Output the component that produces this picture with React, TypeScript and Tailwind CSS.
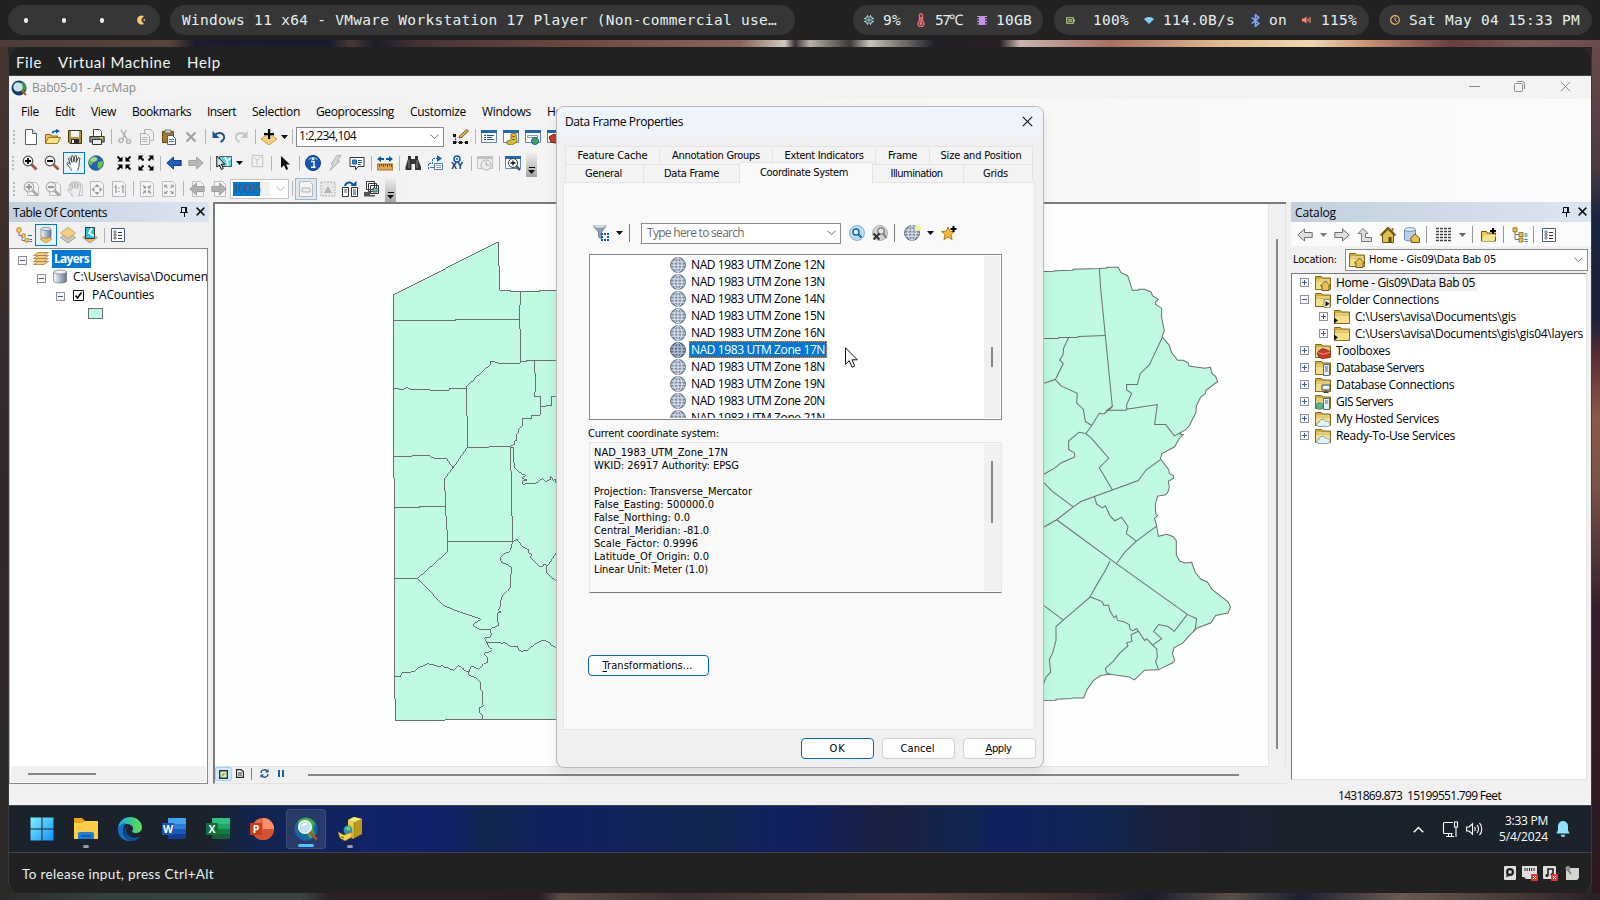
import React, { useLayoutEffect, useRef, useState } from 'react';

type Kids = { children?: React.ReactNode };

/* Single line label whose tracking is tuned so that it occupies an exact advance width. */
function Label({ w, className = '', children }: { w: number; className?: string; children: React.ReactNode }) {
  const ref = useRef<HTMLSpanElement>(null);
  const [spacing, setSpacing] = useState(0);
  useLayoutEffect(() => {
    const el = ref.current;
    if (!el) return;
    const count = (el.textContent || '').length;
    setSpacing((w - el.getBoundingClientRect().width) / Math.max(1, count));
  }, [w]);
  return (
    <span className={`inline-block whitespace-pre ${className}`} ref={ref} style={{ letterSpacing: `${spacing}px` }}>
      {children}
    </span>
  );
}

function Ic({ s = 16, children }: { s?: number } & Kids) {
  return (
    <svg width={s} height={s} viewBox="0 0 16 16" className="block shrink-0" fill="none">
      {children}
    </svg>
  );
}

/* ---------- toolbar primitives ---------- */
const Cell = ({ children, on }: { on?: boolean } & Kids) => (
  <div className={`flex h-[22px] w-[22px] shrink-0 items-center justify-center ${on ? 'border border-[#0078d7] bg-[#e5f1fb]' : ''}`}>{children}</div>
);
const Sep = () => (
  <div className="flex w-[6px] shrink-0 justify-center">
    <div className="h-[15px] w-px bg-[#b4b4b4]" />
  </div>
);
const Grip = () => (
  <div className="flex w-[10px] shrink-0 flex-col items-start gap-[2px] pl-[3px]">
    {[0, 1, 2, 3].map((i) => (
      <div key={i} className="h-[2px] w-[2px] bg-[#b9b9b9]" />
    ))}
  </div>
);
const Caret = ({ c = '#111' }: { c?: string }) => (
  <svg width="7" height="4" viewBox="0 0 7 4" className="block shrink-0">
    <path d="M0 0h7L3.5 4z" fill={c} />
  </svg>
);
const Overflow = () => (
  <div className="ml-[2px] mt-[3px] flex h-[24px] w-[11px] shrink-0 flex-col items-center justify-end gap-[2px] bg-gradient-to-b from-[#f0f0f0] to-[#a5a5a5] pb-[3px]">
    <div className="h-px w-[6px] bg-black" />
    <Caret />
  </div>
);
const Chevron = ({ c = '#666' }: { c?: string }) => (
  <svg width="9" height="6" viewBox="0 0 9 6" className="block shrink-0" fill="none">
    <path d="M.5 .7l4 4 4-4" stroke={c} />
  </svg>
);

/* ---------- toolbar icons ---------- */
const New = () => (
  <Ic>
    <path d="M2.500 .5h7l4 4v11h-11z" fill="#fdfeff" stroke="#4e6074" />
    <path d="M9.500 .5v4h4" fill="#dbe6f0" stroke="#4e6074" />
  </Ic>
);
const Open = () => (
  <Ic>
    <path d="M.5 14.500v-9h5l1 1.500h6v2" fill="#e6c254" stroke="#8a6a1e" />
    <path d="M.5 14.500l3-6h12l-3 6z" fill="#fbe27f" stroke="#9b7a28" />
    <path d="M7.500 4.500c0-2 2-2.500 4-2.500" stroke="#0b5aa8" strokeWidth="1.600" />
    <path d="M11 0l4 2-4 2.500z" fill="#0b5aa8" />
  </Ic>
);
const Save = () => (
  <Ic>
    <path d="M1.500 1.500h13v13H3L1.500 13z" fill="#b39432" stroke="#3a3219" />
    <path d="M4 2h8v6H4z" fill="#eef2f7" />
    <path d="M4 10h8v4H4z" fill="#2b2b2b" />
    <path d="M5 11h2v3H5z" fill="#fff" />
  </Ic>
);
const Print = () => (
  <Ic>
    <path d="M4.500 .5h6l2 2v5h-8z" fill="#fff" stroke="#444" />
    <path d="M.8 7.500h14.400v5.500H.8z" fill="#8d9085" stroke="#333" />
    <path d="M3.500 10.500h9v5h-9z" fill="#e8ecef" stroke="#333" />
    <path d="M11 8.800h3" stroke="#c8d838" strokeWidth="1.500" />
  </Ic>
);
const Cut = () => (
  <Ic>
    <path d="M4 1l6 9M9 1l-3 9" stroke="#b4b4b4" strokeWidth="1.500" />
    <circle cx="4" cy="11.500" r="2" stroke="#b4b4b4" strokeWidth="1.500" />
    <circle cx="11.500" cy="12.500" r="2" stroke="#b4b4b4" strokeWidth="1.500" />
  </Ic>
);
const Copy = () => (
  <Ic>
    <path d="M5.500 .5h6l3 3v8h-9z" fill="#f2f2f2" stroke="#b0b0b0" />
    <path d="M1.500 4.500h6l3 3v8h-9zM3.500 8.500h5M3.500 10.500h5M3.500 12.500h5" fill="#f2f2f2" stroke="#b0b0b0" />
  </Ic>
);
const Paste = () => (
  <Ic>
    <path d="M1.500 2.500h11v11h-11z" fill="#a9792b" stroke="#6e4a12" />
    <path d="M4 1h6v3H4z" fill="#d8dce0" stroke="#555" strokeWidth=".8" />
    <path d="M6.500 6.500h5l3 3v6h-8z" fill="#fff" stroke="#47607c" />
    <path d="M8 10.500h5M8 12.500h5" stroke="#4a7ab8" />
  </Ic>
);
const Del = () => (
  <Ic>
    <path d="M3.500 3.500l9 9M12.500 3.500l-9 9" stroke="#a2a2a2" strokeWidth="2.200" />
  </Ic>
);
const Undo = ({ g, flip }: { g?: boolean; flip?: boolean }) => (
  <Ic>
    <g transform={flip ? 'translate(16 0) scale(-1 1)' : undefined}>
      <path d="M3.500 6.500C6 3.500 11 3 12.800 6.500c1.200 3-1 5.500-3.300 6.500" stroke={g ? '#c4c4c4' : '#1a5490'} strokeWidth="2" />
      <path d="M1.500 2v7h7z" fill={g ? '#c4c4c4' : '#1a5490'} />
    </g>
  </Ic>
);
const AddData = () => (
  <Ic>
    <path d="M8 4l8 6-8 6-8-6z" fill="#f6cf74" stroke="#b78a3a" strokeWidth=".8" />
    <path d="M7 0h2.200v4H13v2.200H9.200V10H7V6.200H3V4h4z" fill="#000" />
  </Ic>
);
const Editor = () => (
  <Ic>
    <path d="M1.500 6.500l2 7h11" stroke="#222" strokeDasharray="2 1" />
    <path d="M0 5h3v3H0zM0 12h3v3H0zM6 12h3v3H6zM12 12h3v3h-3z" fill="#111" />
    <path d="M6 9l1-2.500L14 .5l1.500 1.500-6.500 6.300z" fill="#e9b44a" stroke="#5a3a10" strokeWidth=".8" />
  </Ic>
);
const WinIc = ({ children }: Kids) => (
  <Ic>
    <path d="M.5 1.500h15v12H.5z" fill="#fdfdfd" stroke="#5b87b8" />
    <path d="M0 1h16v3H0z" fill="#2667ad" />
    {children}
  </Ic>
);
const TableWin = () => (
  <WinIc>
    <path d="M3 6.500h2M6 6.500h7M3 8.500h2M6 8.500h5M3 10.500h2M6 10.500h7" stroke="#1d4f9b" />
  </WinIc>
);
const CatWin = () => (
  <WinIc>
    <path d="M8 5l5-1 1 9-5 3-5-1v-3l4-1z" fill="#dcbc32" stroke="#7d6410" strokeWidth=".8" />
    <path d="M9.500 7.500h2M9.500 10.500h2" stroke="#5a4810" />
  </WinIc>
);
const SearchWin = () => (
  <WinIc>
    <path d="M2.500 6.500h10v2h-10z" stroke="#7aa0cc" />
    <circle cx="10" cy="12" r="3.500" fill="#48a060" stroke="#1b5aa5" />
  </WinIc>
);
const ToolWin = () => (
  <WinIc>
    <path d="M2 8l5-3 8 4-2 6-9-2z" fill="#c83c2e" stroke="#7d1c14" />
  </WinIc>
);
const Mag = ({ minus, g }: { minus?: boolean; g?: boolean }) => (
  <Ic>
    {g && <path d="M4.500 1.500h8l3 3v10h-11z" fill="#f4f4f4" stroke="#bdbdbd" />}
    <path d="M9.500 9.500l5 5" stroke={g ? '#a8a8a8' : '#9a5a48'} strokeWidth="2.800" />
    <circle cx="6" cy="6" r="4.800" fill={g ? '#f0f0f0' : '#f4f6f8'} stroke={g ? '#adadad' : '#555'} strokeWidth="1.200" />
    <path d={minus ? 'M3 6h6' : 'M3 6h6M6 3v6'} stroke={g ? '#999' : '#000'} strokeWidth="1.800" />
  </Ic>
);
const Hand = ({ g }: { g?: boolean }) => (
  <Ic>
    {g && <path d="M4.500 1.500h8l3 3v10h-11z" fill="#f4f4f4" stroke="#c4c4c4" />}
    <path
      d="M5.500 15.500C5 12.500 2 11 .8 8.500c.2-1.500 2-1 3.500 1L2.500 3.800c.3-1.200 1.500-1 2 .2L6 7.500l-.8-6c.5-1.300 1.800-1 2 .3L8 7l.8-6c.7-1 1.800-.6 1.800.6L10.200 7.500l2-4.500c.8-.9 1.800-.3 1.600.8C13 8 13.500 11.500 11.500 15.500"
      fill={g ? '#eee' : '#fff'}
      stroke={g ? '#b0b0b0' : '#333'}
      strokeWidth=".9"
    />
  </Ic>
);
const Globe = () => (
  <Ic>
    <circle cx="8" cy="8" r="7.300" fill="#2463b5" stroke="#244a80" strokeWidth=".8" />
    <path d="M4 2c3-1 5 0 5.500 1.500L7 6.500 4.500 8 3 11 1 8.500 1.500 5zM10 7l4.500-1 .5 3-3 5-2-1-.5-3z" fill="#6cc24a" />
    <ellipse cx="6" cy="4.500" rx="3.500" ry="2" fill="#fff" opacity=".45" />
  </Ic>
);
const Arrows4 = ({ out, g }: { out?: boolean; g?: boolean }) => (
  <Ic>
    {g && <path d="M1.500 .5h10l3 3v12h-13z" fill="#f4f4f4" stroke="#bdbdbd" />}
    <g transform={g ? 'translate(3 3.500) scale(.62)' : undefined}>
      {[0, 90, 180, 270].map((r) => (
        <g key={r} transform={`rotate(${r} 8 8)`}>
          <path d="M1.500 1.500l4 4" stroke={g ? '#999' : '#000'} strokeWidth="2" />
          <path d={out ? 'M.5 .5h5l-5 5z' : 'M6.500 6.500h-5l5-5z'} fill={g ? '#999' : '#000'} />
        </g>
      ))}
    </g>
  </Ic>
);
const Arrow = ({ dir, c, s, page }: { dir: 'l' | 'r' | 'u'; c: string; s: string; page?: boolean }) => (
  <Ic>
    {page && <path d="M3.500 .5h8l3 3v12h-11z" fill="#f4f4f4" stroke="#bdbdbd" />}
    <path
      transform={dir === 'r' ? 'rotate(180 8 8)' : dir === 'u' ? 'rotate(90 8 8)' : undefined}
      d="M.8 8l6.700-6v3.500h7.700v5H7.500V14z"
      fill={c}
      stroke={s}
    />
  </Ic>
);
const Select = () => (
  <Ic>
    <path d="M3.500 1.500h12v10h-12z" fill="#5cd3ea" stroke="#555" />
    <path d="M9 2l2 4 4-3M11 6l1 5" stroke="#fff" strokeWidth="1.500" />
    <path d="M.8 1v11l2.500-2 2 4.500 2-1-2-4.300h3.500z" fill="#e4e4e4" stroke="#111" />
  </Ic>
);
const Clear = () => (
  <Ic s={14}>
    <path d="M2.500 1.500h12v13h-12zM5 4l3 3 5-4M8 7v6" fill="#f3f3f3" stroke="#bbb" />
  </Ic>
);
const Pointer = () => (
  <Ic>
    <path d="M4 1v12l3-2.700L9.200 15l2-1L9.200 9.600H13z" fill="#111" />
  </Ic>
);
const Info = () => (
  <Ic>
    <circle cx="8" cy="8" r="7.500" fill="#1657b5" stroke="#0b3a85" />
    <path d="M3 5c2-4 8-4 10 0-3-1-7-1-10 0z" fill="#6f9fe0" />
    <path d="M6 6.500h3V12h1.200M6 12.200h4.500" stroke="#fff" strokeWidth="1.400" />
    <circle cx="8" cy="3.800" r="1.200" fill="#fff" />
  </Ic>
);
const Bolt = () => (
  <Ic>
    <path d="M10 .5h4L10 6h3L3 15.500 6.500 9H4z" fill="#d5d5d5" stroke="#b0b0b0" />
  </Ic>
);
const Popup = () => (
  <Ic>
    <path d="M1 2.500h14v9H9l-2.500 3.500v-3.500H1z" fill="#fff" stroke="#333" />
    <path d="M3.500 5h4v4h-4zM9 5.500h4M9 7.500h4M9 9.500h3" fill="#3b86d0" stroke="#1e61a8" />
  </Ic>
);
const Measure = () => (
  <Ic>
    <path d="M0 9h16v6H0z" fill="#e2a94a" stroke="#8a5b1a" strokeWidth=".8" />
    <path d="M2.500 9v3M4.500 9v2M6.500 9v3M8.500 9v2M10.500 9v3M12.500 9v2M14.500 9v3" stroke="#5a3a10" strokeWidth=".8" />
    <path d="M0 4l4-3v2h3v2H4v2zM16 4l-4-3v2H9v2h3v2z" fill="#0b5aa8" />
  </Ic>
);
const Bino = () => (
  <Ic>
    <path d="M3 1h3v3h4V1h3v3l3 8v3h-6V9H6.500v6H.5v-3L3 4z" fill="#333" />
    <path d="M4 5v8M12 5v8" stroke="#888" />
  </Ic>
);
const Route = () => (
  <Ic>
    <path d="M1.500 14V8.500h4V3.500h6" stroke="#1b5fa8" strokeDasharray="2 1" />
    <path d="M10 0l5 3.500-5 3.500z" fill="#1b5fa8" />
    <path d="M7.500 8.500h8v6h-8zM3 12.500h4" fill="#fff" stroke="#4a7ab0" />
    <path d="M9 10.500h5M9 12.500h5" stroke="#888" strokeWidth=".8" />
  </Ic>
);
const XY = () => (
  <div className="flex w-[16px] flex-col items-center">
    <svg width="8" height="8" viewBox="0 0 8 8" className="block" fill="none">
      <circle cx="4" cy="4" r="3" stroke="#0b5aa8" strokeWidth="1.500" />
      <circle cx="4" cy="4" r="1" fill="#0b5aa8" />
    </svg>
    <span className="h-[8px] font-['DejaVu_Sans'] text-[8px] font-bold leading-[8px] text-[#0b4a94]">XY</span>
  </div>
);
const Time = () => (
  <Ic>
    <path d="M.5 1.500h15v12H.5z" fill="#eee" stroke="#c0c0c0" />
    <path d="M0 1h16v3H0z" fill="#c0c0c0" />
    <circle cx="9" cy="10" r="5" fill="#eee" stroke="#b0b0b0" />
    <path d="M9 7v3h3" stroke="#a0a0a0" />
  </Ic>
);
const Viewer = () => (
  <WinIc>
    <path d="M10 10l5 5" stroke="#555" strokeWidth="2.500" />
    <circle cx="8" cy="8" r="4.500" fill="#fff" stroke="#333" />
    <path d="M5.500 8h5M8 5.500v5" stroke="#111" strokeWidth="1.300" />
  </WinIc>
);
const PageBox = ({ children }: Kids) => (
  <Ic>
    <path d="M1.500 .5h10l3 3v12h-13z" fill="#f4f4f4" stroke="#b8b8b8" />
    {children}
  </Ic>
);
const Swap = () => (
  <Ic>
    <path d="M.5 6.500h6v9h-6zM9.500 6.500h6v9h-6z" fill="#fff" stroke="#333" />
    <path d="M2 9h3M2 11h3M11 9h3" stroke="#555" />
    <path d="M3 5c1-4 6-5 8-1" stroke="#0b5aa8" strokeWidth="2" />
    <path d="M8.500 5h6V0z" fill="#0b5aa8" />
    <path d="M11 10h3v4h-3z" fill="#58b0c8" />
  </Ic>
);
const DDP = () => (
  <Ic>
    <path d="M2.500 .5h8v8h-8zM4.500 2.500h8v8h-8zM6.500 4.500h8v8h-8z" fill="#fff" stroke="#333" />
    <path d="M9 7h4v4H9z" fill="#6fbf6a" stroke="#2a6a9a" />
    <path d="M0 11h6v3h5v1.500H0z" fill="#555" />
  </Ic>
);

/* ---------- panel icons ---------- */
const Pin = () => (
  <svg width="8" height="10" viewBox="0 0 8 10" className="block" fill="none" shapeRendering="crispEdges">
    <path d="M1.500 .5h5v5h-5zM0 5.500h8M4 6v4M5.500 1v4" stroke="#111" />
  </svg>
);
const Close = ({ s = 9, c = '#111', sw = 1.6 }: { s?: number; c?: string; sw?: number }) => (
  <svg width={s} height={s} viewBox="0 0 10 10" className="block" fill="none">
    <path d="M.7 .7l8.600 8.600M9.300 .7L.7 9.300" stroke={c} strokeWidth={sw} />
  </svg>
);
const DrawOrder = () => (
  <Ic>
    <path d="M3 4v4.500h3.500M6 9v4.500h3" stroke="#777" />
    <circle cx="3" cy="3" r="2.500" fill="#f3c55c" stroke="#a87a20" strokeWidth=".7" />
    <circle cx="7.500" cy="8.500" r="2" fill="#f3c55c" stroke="#a87a20" strokeWidth=".7" />
    <path d="M9 11.500h3.500v3.500H9z" fill="#f3c55c" stroke="#a87a20" strokeWidth=".7" />
    <path d="M12 8.500h4M13.500 12.500H16M13.500 14.500H16" stroke="#2a6ab0" />
  </Ic>
);
const Cyl = ({ d }: { d?: boolean }) => (
  <Ic>
    {d && <path d="M8 7l6 5-6 4-6-4z" fill="#f3c55c" stroke="#b8862a" strokeWidth=".7" />}
    <path d={d ? 'M3 2v8c2 1.500 8 1.500 10 0V2z' : 'M1.500 3v9.500c2 2 11 2 13 0V3z'} fill="url(#cyl)" stroke="#6a7484" strokeWidth=".7" />
    <ellipse cx="8" cy={d ? 2 : 3} rx={d ? 5 : 6.5} ry={d ? 1.5 : 2} fill="#eef1f6" stroke="#6a7484" strokeWidth=".7" />
    <defs>
      <linearGradient id="cyl">
        <stop stopColor="#fff" />
        <stop offset="1" stopColor="#5f7390" />
      </linearGradient>
    </defs>
  </Ic>
);
const Visible = ({ sel }: { sel?: boolean }) => (
  <Ic>
    <path d="M8 5l7.500 5.500L8 16 .5 10.500z" fill={sel ? '#f3b95c' : '#c8c8c8'} stroke="#888" strokeWidth=".7" />
    {sel ? (
      <>
        <path d="M3.500 .5h9v11h-9z" fill="#29c3e0" stroke="#333" />
        <path d="M10 1l-3 5 5 3" stroke="#fff" strokeWidth="1.800" />
      </>
    ) : (
      <path d="M8 .5L15.500 6 8 11.500.5 6z" fill="#f6cf84" stroke="#b8862a" strokeWidth=".7" />
    )}
  </Ic>
);
const Options = () => (
  <Ic>
    <path d="M1.500 1.500h13v13h-13z" fill="#fff" stroke="#3e5f87" />
    <path d="M4 4h2v2H4zM4 7h2v2H4zM4 10h2v2H4z" fill="#fff" stroke="#555" strokeWidth=".8" />
    <path d="M8 5.500h4M8 8.500h4M8 11.500h4" stroke="#333" />
  </Ic>
);
const Stack = () => (
  <Ic>
    {[11, 8, 5, 2].map((y) => (
      <path key={y} d={`M.5 ${y + 2.5}l4.500-3h10.500l-4.500 3z`} fill="#f6cf84" stroke="#9a7028" strokeWidth=".7" />
    ))}
  </Ic>
);
const Box = ({ plus }: { plus?: boolean }) => (
  <svg width="9" height="9" viewBox="0 0 9 9" className="block shrink-0" fill="none" shapeRendering="crispEdges">
    <path d="M.5 .5h8v8h-8z" fill="#fafafa" stroke="#919191" />
    <path d={plus ? 'M2 4.500h5M4.500 2v5' : 'M2 4.500h5'} stroke="#3a5aa8" />
  </svg>
);
const House = () => (
  <Ic>
    <path d="M2.500 8v7.500h11V8L8 2.500z" fill="#e4c04c" stroke="#6d5312" />
    <path d="M.5 8.500L8 .8l7.500 7.700" stroke="#6d5312" strokeWidth="1.800" />
    <path d="M8.500 10h3v5.500h-3z" fill="#5d4610" />
    <path d="M11.500 1h2v3h-2z" fill="#a08030" />
  </Ic>
);
const Folder = ({ kind }: { kind: string }) => (
  <Ic>
    <path d="M.5 2.500v-1h6l1.500 1.500h7.500v11.500H.5z" fill="#cfac36" stroke="#86691a" />
    <path d="M1 6.500h14v7.500H1z" fill="#f5e08a" />
    <path d="M1.500 5h13" stroke="#fff" opacity=".8" />
    {kind === 'home' && <path d="M5.500 11L10.500 6l5 5h-1.500v4.500H7V11z" fill="#e7c25a" stroke="#5d4610" strokeWidth=".9" />}
    {kind === 'conn' && (
      <>
        <path d="M9 7.500h6v8H9z" fill="#f2f2ee" stroke="#86691a" strokeWidth=".7" />
        <path d="M10.500 9l4 2.700-4 2.700z" fill="#111" />
      </>
    )}
    {kind === 'link' && <path d="M0 8.500l4 3-4 3z" fill="#111" />}
    {kind === 'tool' && (
      <>
        <path d="M2.500 9l5-3.500 8 3-1.500 6-7 1.300L3 13z" fill="#c9392c" stroke="#7d1c14" strokeWidth=".8" />
        <path d="M3 9.500l5 1.800 7-2.300" stroke="#f4aaa0" strokeWidth=".8" />
      </>
    )}
    {kind === 'server' && <path d="M8.500 4.500h6v11h-6zM10 7h3M10 9h3M10 11h3" fill="#e6edf5" stroke="#4a6a90" />}
    {kind === 'dbc' && <path d="M7 8h8v5H7zM11 13v2.500M8.500 15.500h5" fill="#eaf2fa" stroke="#345" />}
    {kind === 'gis' && (
      <>
        <path d="M8.500 4.500h6v11h-6zM10 7h3M10 9h3" fill="#e6edf5" stroke="#4a6a90" />
        <circle cx="4.500" cy="12" r="3.500" fill="#5cb870" stroke="#3a7aa0" strokeWidth=".7" />
      </>
    )}
    {kind === 'cloud' && <path d="M4 15.500c-3 0-3-4 0-4 .5-4 5.500-4 6.500-1 4-1.500 6.500 4.500 2 5z" fill="#e3f1fb" stroke="#6a94b8" strokeWidth=".8" />}
  </Ic>
);
const WireGlobe = ({ dark }: { dark?: boolean }) => (
  <Ic>
    <circle cx="8" cy="8" r="7.500" fill={dark ? '#5a6e88' : '#7c8da3'} stroke={dark ? '#3d5270' : '#5c6e86'} strokeWidth=".9" />
    <path d="M1.500 5h13M.8 8.200h14.400M1.500 11.200h13M8 .8v14.400" stroke={dark ? '#d4dde8' : '#f3f6fa'} strokeWidth=".9" />
    <ellipse cx="8" cy="8" rx="4" ry="7.200" stroke={dark ? '#d4dde8' : '#f3f6fa'} strokeWidth=".9" />
  </Ic>
);

/* ---------- data ---------- */
const menus: [string, number][] = [
  ['File', 18], ['Edit', 20], ['View', 25], ['Bookmarks', 59], ['Insert', 29], ['Selection', 48],
  ['Geoprocessing', 78], ['Customize', 56], ['Windows', 49], ['Help', 24],
];
const catalog: { l: number; plus: boolean; k: string; t: string; w: number; sel?: boolean }[] = [
  { l: 0, plus: true, k: 'home', t: 'Home - Gis09\\Data Bab 05', w: 139, sel: true },
  { l: 0, plus: false, k: 'conn', t: 'Folder Connections', w: 103 },
  { l: 1, plus: true, k: 'link', t: 'C:\\Users\\avisa\\Documents\\gis', w: 161 },
  { l: 1, plus: true, k: 'link', t: 'C:\\Users\\avisa\\Documents\\gis\\gis04\\layers', w: 228 },
  { l: 0, plus: true, k: 'tool', t: 'Toolboxes', w: 54 },
  { l: 0, plus: true, k: 'server', t: 'Database Servers', w: 88 },
  { l: 0, plus: true, k: 'dbc', t: 'Database Connections', w: 118 },
  { l: 0, plus: true, k: 'gis', t: 'GIS Servers', w: 57 },
  { l: 0, plus: true, k: 'cloud', t: 'My Hosted Services', w: 103 },
  { l: 0, plus: true, k: 'cloud', t: 'Ready-To-Use Services', w: 119 },
];
const crs: [string, number][] = [
  ['NAD_1983_UTM_Zone_17N', 134], ['WKID: 26917 Authority: EPSG', 145], ['', 0], ['Projection: Transverse_Mercator', 158],
  ['False_Easting: 500000.0', 120], ['False_Northing: 0.0', 96], ['Central_Meridian: -81.0', 115],
  ['Scale_Factor: 0.9996', 104], ['Latitude_Of_Origin: 0.0', 115], ['Linear Unit: Meter (1.0)', 114],
];

/* ---------- host desktop bar ---------- */
const Pill = ({ className, children }: { className: string } & Kids) => (
  <div className={`flex h-[30px] shrink-0 items-center rounded-[15px] bg-[#363636] ${className}`}>{children}</div>
);
function TopBar() {
  return (
    <div className="flex h-[40px] shrink-0 items-center bg-[#212121] pl-[8px] font-['DejaVu_Sans_Mono',monospace] text-[14.500px] leading-[30px] text-[#e3f1f1]">
      <Pill className="w-[152px] pl-[16px]">
        <div className="h-[5px] w-[4px] rounded-full bg-[#e3f1f1]" />
        <div className="ml-[34px] h-[5px] w-[4px] rounded-full bg-[#e3f1f1]" />
        <div className="ml-[34px] h-[5px] w-[4px] rounded-full bg-[#e3f1f1]" />
        <svg width="10" height="10" viewBox="0 0 10 10" className="ml-[32px] block">
          <path d="M8 1A4.600 4.600 0 1 0 8 9L5.500 6V4z" fill="#ffc56d" />
          <circle cx="8.300" cy="5" r=".9" fill="#ffc56d" />
        </svg>
      </Pill>
      <Pill className="ml-[10px] w-[625px] pl-[12px]">
        <Label w={595}>Windows 11 x64 - VMware Workstation 17 Player (Non-commercial use…</Label>
      </Pill>
      <Pill className="ml-[58px] w-[190px] pl-[11px]">
        <svg width="10" height="10" viewBox="0 0 10 10" fill="none" className="block">
          <path d="M2 2h6v6H2zM4 4h2v2H4zM3.500 0v2M6.500 0v2M3.500 8v2M6.500 8v2M0 3.500h2M0 6.500h2M8 3.500h2M8 6.500h2" stroke="#9ccfd8" />
        </svg>
        <Label className="ml-[9px]" w={18}>9%</Label>
        <svg width="8" height="14" viewBox="0 0 8 14" fill="none" className="ml-[16px] block">
          <path d="M2.500 8V2.200a1.500 1.500 0 0 1 3 0V8a3 3 0 1 1-3 0zM4 4v6" stroke="#f07178" strokeWidth="1.300" />
          <circle cx="4" cy="10.500" r="1.500" fill="#f07178" />
        </svg>
        <Label className="ml-[10px]" w={27}>57℃</Label>
        <svg width="10" height="9" viewBox="0 0 10 9" className="ml-[15px] block">
          <path d="M2 0h6v9H2z" fill="#c792ea" />
          <path d="M0 .5h10M0 3h10M0 5.500h10M0 8h10" stroke="#c792ea" />
        </svg>
        <Label className="ml-[9px]" w={36}>10GB</Label>
      </Pill>
      <Pill className="ml-[11px] w-[315px] pl-[12px]">
        <svg width="9" height="7" viewBox="0 0 9 7" fill="none" className="block">
          <path d="M.7 .7h6.600v5.600H.7zM8.500 2.500v2M2 2.700h4M2 4.300h4" stroke="#b5d883" strokeWidth="1.100" />
        </svg>
        <Label className="ml-[18px]" w={36}>100%</Label>
        <svg width="10" height="7" viewBox="0 0 10 7" className="ml-[15px] block">
          <path d="M0 2C3-.7 7-.7 10 2L5 7z" fill="#7dcfff" />
        </svg>
        <Label className="ml-[9px]" w={72}>114.0B/s</Label>
        <svg width="9" height="13" viewBox="0 0 9 13" fill="none" className="ml-[16px] block">
          <path d="M.8 3.500l7 6-3.300 2.800V.7l3.300 2.800-7 6" stroke="#82aaff" strokeWidth="1.600" />
        </svg>
        <Label className="ml-[9px]" w={18}>on</Label>
        <svg width="10" height="8" viewBox="0 0 10 8" fill="none" className="ml-[15px] block">
          <path d="M0 2.500h2L4.500 .2v7.600L2 5.500H0z" fill="#f78c6c" />
          <path d="M6 2.500v3M8 1v6" stroke="#f78c6c" strokeWidth="1.200" />
        </svg>
        <Label className="ml-[9px]" w={36}>115%</Label>
      </Pill>
      <Pill className="ml-[10px] w-[213px] pl-[11px]">
        <svg width="10" height="10" viewBox="0 0 10 10" fill="none" className="block">
          <circle cx="5" cy="5" r="4.300" stroke="#f0b86a" strokeWidth="1.200" />
          <path d="M5 2.300V5l2 2" stroke="#f0b86a" />
        </svg>
        <Label className="ml-[9px]" w={171}>Sat May 04 15:33 PM</Label>
      </Pill>
    </div>
  );
}

/* ---------- map ---------- */
const westOutline =
  'M40 225L355 65L355 137L358 140L359 211L390 211L391 214L480 214L480 211L545 211L545 1498L195 1499L195 1501L46 1501L46 1437L43 1436L43 774L40 773Z';
const westLines = [
  'M40 301H228V298H418',
  'M421 214V254L418 256V325L421 327V430H356L345 426L342 424H332V433L326 440L318 443L309 453L303 459L296 466L288 470L282 480L271 488L260 498V506H208V511H150V509L88 507L80 502L72 508L57 507L54 505H40',
  'M421 424H441V421H545M463 421V447L465 456L466 514L463 518V529H481V586H455V597H440V595H427V619L416 626V635L410 645V660L404 664V674L396 676',
  'M481 559H499L500 556H515V529H545',
  'M260 506V588L262 590V682H326L328 680H392L396 676',
  'M262 682L230 728L194 776V812L196 816V884L199 888V928L202 932V996L113 1075H43M113 1075L190 1156L228 1172L300 1196L301 1200L284 1209L280 1214L285 1221L305 1230L330 1229L334 1225L350 1219L357 1214L353 1205L354 1178L364 1177L355 1172L360 1163L361 1147L368 1124L382 1114L391 1103L394 1042L379 1032L364 1027L361 1013L368 1004L386 996L391 991L398 966H300L299 964H202',
  'M40 710H95L97 707H151L152 712L169 715L200 716L208 729L219 743M43 862H119L120 859H196',
  'M392 680V750L394 755V880L397 890V966L411 958L418 968L431 983L445 988L446 998L454 1003L452 1013L464 1024L478 1038L487 1041L490 1035H498L500 1041L530 997M498 1041L499 1056L513 1071L530 1084',
  'M392 682L401 684V724L405 745L410 750L428 764L439 766L429 770L428 776L441 780L426 784L430 793L446 789L463 792L476 785L487 775L497 786L510 779L512 768L520 781L530 777L524 783L530 791',
  'M330 1229L334 1244L330 1251L314 1253L319 1267L327 1280L337 1289L326 1298L314 1298V1306L322 1312L324 1327L311 1331L296 1349L275 1337L267 1355L253 1352L249 1345L235 1336L221 1351L201 1343L193 1342L190 1337L175 1339L155 1333L140 1331L139 1334L116 1343L104 1353L88 1357L67 1357L60 1371L43 1369',
  'M319 1267H360L362 1270L375 1268L389 1278L413 1281L418 1292L429 1294L432 1290L441 1293L460 1276L479 1264L495 1261L507 1267L514 1275L530 1285',
  'M267 1355L266 1366L287 1373L300 1386L302 1408L308 1415V1450L310 1459L299 1462V1480L307 1486V1498',
];
const eastOutline =
  'M20 212L74 211V209L129 208V205L208 203L230 201V199H265L273 215L293 224L307 267H325L327 264H344L363 272L368 284L385 294L377 302V309L395 320V348L403 386L396 404L418 430L424 450L443 474H460L474 482L477 491L524 498L541 495L546 514L557 522L563 537L528 563L526 573L512 583L499 610L498 628L478 668L466 680L452 688V694H460L447 707L434 730L396 750L391 766L416 797L418 809L431 816L431 823L415 832L418 850L413 866L405 873L383 876L376 900L377 927L383 934L374 942L380 965L385 995L410 989L430 996L439 1008V1050L449 1068L465 1074L485 1072L496 1102L513 1122L532 1130L547 1153L594 1189L602 1204L594 1222L557 1229L543 1251L502 1266L478 1288L458 1311L432 1325L427 1342L434 1362L428 1369L385 1390L344 1391L313 1420L297 1411L240 1403L212 1407L190 1422L172 1447L161 1473H128L126 1475L78 1477V1480L20 1481Z';
const eastLines = [
  'M208 203L212 262L226 401L247 611L231 622H287L290 619L382 605L374 664H407L433 698L452 688',
  'M20 410H84L86 407H142L145 404L226 401',
  'M396 408L358 488L331 513L322 546L290 546V562L305 572L290 605V619',
  'M116 407L101 438L99 458L89 474L100 484L76 531L39 543M76 531L93 550L142 572L140 601L160 619L166 655L185 667L168 691L186 707L236 764L208 792L247 857',
  'M247 611L222 633L208 631L185 667M168 691L147 687L116 713V738L134 749V760L93 778L76 792L39 813',
  'M391 768L348 799L325 830L247 858L193 877L153 892L130 908L80 946L39 969M39 834L67 862L130 908',
  'M80 946L259 1076L472 1226L500 1239L496 1267L490 1278',
  'M193 877L200 900L217 911L226 905L240 934L254 949L275 939L294 966L289 987L319 1009L380 965M319 1009L286 1040L259 1076',
  'M240 1068L226 1096L204 1132L179 1176L100 1243L78 1262V1303L68 1340L58 1360L62 1397L48 1412L39 1436M39 1198L100 1243',
  'M179 1174L217 1188L221 1199L236 1199L239 1214L252 1236L259 1229L262 1243L285 1249L298 1257L300 1270L308 1274L320 1268L344 1303L350 1298L368 1317L380 1328L382 1352L377 1366L385 1388',
  'M325 1276L303 1286L306 1306L290 1310L294 1319L270 1340L250 1364L226 1386L230 1399L240 1403',
  'M472 1226L433 1276L414 1262L386 1256L371 1276L395 1298L368 1317',
];
function MapView() {
  return (
    <svg width="1053" height="562" viewBox="215 204 1053 562" className="block bg-[#fdfffe]" shapeRendering="crispEdges">
      <g transform="translate(380 220) scale(.33333)" stroke="#6e6e6e" strokeWidth="3" fill="none">
        <path d={westOutline} fill="#bffae1" />
        {westLines.map((d) => <path key={d} d={d} />)}
      </g>
      <g transform="translate(1030 200) scale(.33333 .33801)" stroke="#6e6e6e" strokeWidth="3" fill="none">
        <path d={eastOutline} fill="#bffae1" />
        {eastLines.map((d) => <path key={d} d={d} />)}
      </g>
    </svg>
  );
}

/* ---------- ArcMap ---------- */
const PanelHead = ({ t, w }: { t: string; w: number }) => (
  <div className="flex h-[20px] shrink-0 items-center bg-gradient-to-r from-[#c2cfdd] to-[#dbe6f3] pl-[4px] pr-[4px] text-[12px]">
    <div className="pt-[2px]"><Label w={w}>{t}</Label></div>
    <div className="mb-px ml-auto mr-[8px]"><Pin /></div>
    <div className="mb-px"><Close /></div>
  </div>
);

function Toolbars() {
  return (
    <div className="flex h-[77px] shrink-0 flex-col pl-[3px]">
      <div className="-ml-[3px] flex h-[25px] items-center pb-[2px] pl-px">
        <Grip />
        <Cell><New /></Cell><Cell><Open /></Cell><Cell><Save /></Cell><Cell><Print /></Cell>
        <Sep />
        <Cell><Cut /></Cell><Cell><Copy /></Cell><Cell><Paste /></Cell><Cell><Del /></Cell>
        <Sep />
        <Cell><Undo /></Cell><Cell><Undo flip g /></Cell>
        <Sep />
        <Cell><AddData /></Cell>
        <div className="flex w-[9px] justify-center"><Caret /></div>
        <Sep />
        <div className="ml-px mt-px flex h-[20px] w-[148px] items-center justify-between border border-[#8a8a8a] bg-white pl-[2px] pr-[4px] text-[12px]">
          <Label className="-mt-[2px]" w={57}>1:2,234,104</Label>
          <Chevron />
        </div>
        <div className="ml-[6px]"><Cell><Editor /></Cell></div>
        <Sep />
        <Cell><TableWin /></Cell><Cell><CatWin /></Cell><Cell><SearchWin /></Cell><Cell><ToolWin /></Cell>
      </div>
      <div className="-ml-[3px] flex h-[26px] items-center">
        <Grip />
        <Cell><Mag /></Cell><Cell><Mag minus /></Cell><Cell on><Hand /></Cell><Cell><Globe /></Cell>
        <div className="w-[6px]" />
        <Cell><Arrows4 /></Cell><Cell><Arrows4 out /></Cell>
        <Sep />
        <Cell><Arrow dir="l" c="#1f5fc0" s="#123f8a" /></Cell><Cell><Arrow dir="r" c="#b8b8b8" s="#a5a5a5" /></Cell>
        <Sep />
        <Cell><Select /></Cell>
        <div className="flex w-[9px] justify-center"><Caret /></div>
        <div className="mb-[4px] ml-[2px]"><Cell><Clear /></Cell></div>
        <Sep />
        <Cell><Pointer /></Cell>
        <Sep />
        <Cell><Info /></Cell><Cell><Bolt /></Cell><Cell><Popup /></Cell>
        <Sep />
        <Cell><Measure /></Cell>
        <Sep />
        <Cell><Bino /></Cell><Cell><Route /></Cell><Cell><XY /></Cell>
        <Sep />
        <Cell><Time /></Cell>
        <Sep />
        <Cell><Viewer /></Cell>
        <Overflow />
      </div>
      <div className="-ml-[3px] flex h-[26px] items-center pb-px pl-px">
        <Grip />
        <Cell><Mag g /></Cell><Cell><Mag g minus /></Cell><Cell><Hand g /></Cell>
        <Cell><PageBox><path d="M8 3l2.500 3h-5zM8 14l2.500-3h-5zM2.500 8.500l3-2.500v5zM13.500 8.500l-3-2.500v5z" fill="#9a9a9a" /></PageBox></Cell>
        <Cell><PageBox><path d="M3.500 6l1.500-1v7M8 6.500v1M8 10v1M10.500 6L12 5v7" stroke="#9a9a9a" strokeWidth="1.300" /></PageBox></Cell>
        <Sep />
        <Cell><Arrows4 g /></Cell><Cell><Arrows4 g out /></Cell>
        <Sep />
        <Cell><Arrow dir="l" page c="#b0b0b0" s="#a0a0a0" /></Cell><Cell><Arrow dir="r" page c="#b0b0b0" s="#a0a0a0" /></Cell>
        <div className="flex h-[20px] w-[59px] items-center justify-between border border-[#c5c5c5] bg-white pl-[2px] pr-[3px] text-[12px] leading-[14px] text-[#505a66]">
          <span className="flex h-[14px] w-[37px] bg-[#f0f0f0]">
            <span className="flex w-[27px] bg-[#0078d7]"><Label w={27}>100%</Label></span>
          </span>
          <Chevron c="#b0b0b0" />
        </div>
        <Sep />
        <div className="flex h-[22px] w-[22px] items-center justify-center border border-[#9db6cf] bg-[#dfe8f1]">
          <PageBox><path d="M4 7h8v4H4z" fill="#eee" stroke="#b0b0b0" /></PageBox>
        </div>
        <Cell><Ic><path d="M1 1h14v14H1z" fill="#e8e8e8" stroke="#b0b0b0" strokeDasharray="2 1" /><path d="M4 12l4-7 4 7z" fill="#b5b5b5" /></Ic></Cell>
        <Cell><Swap /></Cell><Cell><DDP /></Cell>
        <Overflow />
      </div>
    </div>
  );
}

function Toc() {
  return (
    <div className="flex w-[200px] shrink-0 flex-col">
      <PanelHead t="Table Of Contents" w={94} />
      <div className="flex h-[26px] shrink-0 items-center pl-[4px]">
        <Cell><DrawOrder /></Cell><Cell on><Cyl d /></Cell><Cell><Visible /></Cell><Cell><Visible sel /></Cell>
        <Sep />
        <Cell><Options /></Cell>
      </div>
      <div className="flex h-[536px] w-[199px] flex-col overflow-hidden border border-[#828790] border-l-[#b5b8bd] bg-white text-[12px]">
        <div className="mt-px flex h-[18px] shrink-0 items-center pl-[8px]">
          <div className="mt-[2px]"><Box /></div>
          <div className="ml-[6px]"><Stack /></div>
          <div className="ml-[3px] h-[18px] w-[39px] bg-[#0078d7] pl-[2px] font-bold leading-[18px] text-white"><Label w={35}>Layers</Label></div>
        </div>
        <div className="flex h-[18px] w-[197px] shrink-0 items-center overflow-hidden pl-[27px]">
          <div className="mt-[2px]"><Box /></div>
          <div className="ml-[6px]"><Cyl /></div>
          <div className="ml-[5px] shrink-0"><Label w={139}>C:\Users\avisa\Document</Label></div>
        </div>
        <div className="flex h-[18px] shrink-0 items-center pl-[46px]">
          <div className="mt-[2px]"><Box /></div>
          <svg width="11" height="11" viewBox="0 0 11 11" className="ml-[8px] block" fill="none">
            <path d="M.5 .5h10v10h-10z" fill="#fff" stroke="#111" />
            <path d="M2.500 5.500l2 2.500 4-5.500" stroke="#000" strokeWidth="1.600" />
          </svg>
          <div className="ml-[8px]"><Label w={62}>PACounties</Label></div>
        </div>
        <div className="ml-[78px] mt-[4px] h-[11px] w-[15px] border border-[#6e6e6e] bg-[#bffae1]" />
        <div className="mx-px mb-px mt-auto flex h-[16px] items-center bg-[#f0f0f0] pl-[17px]">
          <div className="h-[2px] w-[68px] bg-[#868686]" />
        </div>
      </div>
    </div>
  );
}

function MapPane() {
  return (
    <div className="ml-[4px] flex w-[1073px] shrink-0 flex-col">
      <div className="flex h-[565px] border-l-2 border-t-2 border-[#7b7b7b]">
        <div className="border-b border-r border-[#e3e3e3]"><MapView /></div>
        <div className="ml-px flex w-[17px] border-r border-[#e3e3e3] bg-[#f0f0f0] pl-[6px] pt-[35px]">
          <div className="h-[510px] w-[2px] bg-[#868686]" />
        </div>
      </div>
      <div className="flex h-[17px] items-start border-b border-l-2 border-b-[#e3e3e3] border-l-[#7b7b7b] bg-[#f0f0f0]">
        <div className="flex h-[14px] w-[17px] items-center justify-center rounded-[2px] border border-[#99d1ff] bg-[#cce8ff]">
          <svg width="9" height="9" viewBox="0 0 9 9" fill="none"><path d="M.7 .7h7.600v7.600H.7z" fill="#e7f0c0" stroke="#333" strokeWidth="1.400" /><path d="M2 7l2-4 3 1z" fill="#7ab03a" /></svg>
        </div>
        <svg width="8" height="9" viewBox="0 0 8 9" fill="none" className="ml-[4px] mt-[2px]"><path d="M.6 .6h4.600l2.200 2.200v5.600H.6zM2 4h4M2 6h4" fill="#fff" stroke="#222" strokeWidth="1.200" /></svg>
        <div className="ml-[7px] mt-px h-[12px] w-px bg-[#808080]" />
        <svg width="9" height="9" viewBox="0 0 9 9" fill="none" className="ml-[8px] mt-[2px]"><path d="M1 4a3.500 3.500 0 0 1 6.500-1.500M8 5a3.500 3.500 0 0 1-6.500 1.500" stroke="#1b4f88" strokeWidth="1.300" /><path d="M8.500 0v3.500H5zM.5 9V5.500H4z" fill="#1b4f88" /></svg>
        <svg width="6" height="7" viewBox="0 0 6 7" className="ml-[9px] mt-[3px]"><path d="M0 0h2v7H0zM4 0h2v7H4z" fill="#1b5fa8" /></svg>
        <div className="ml-[24px] mt-[7px] h-[2px] w-[931px] bg-[#868686]" />
      </div>
    </div>
  );
}

function Catalog() {
  return (
    <div className="ml-[5px] flex w-[300px] shrink-0 flex-col">
      <PanelHead t="Catalog" w={41} />
      <div className="flex h-[24px] shrink-0 items-center bg-[#fbfbfb] pl-[6px] pt-px">
        <Arrow dir="l" c="#dedede" s="#6e6e6e" />
        <div className="ml-[7px]"><Caret c="#777" /></div>
        <div className="ml-[7px]"><Arrow dir="r" c="#dedede" s="#6e6e6e" /></div>
        <div className="ml-[7px]"><Ic><path d="M6 1.500l5 5H8.500v4h6v4h-10v-8H1z" fill="#dedede" stroke="#777" /></Ic></div>
        <div className="ml-[7px]"><House /></div>
        <div className="ml-[8px]"><Ic><path d="M.5 2.500v10c2 2 9 2 11 0v-10z" fill="#b9cfe8" stroke="#6c8db4" /><ellipse cx="6" cy="2.500" rx="5.500" ry="1.800" fill="#eef4fa" stroke="#6c8db4" /><path d="M6.500 11l4.500-4 4.500 4v4.500h-8z" fill="#e4c04c" stroke="#6d5312" /></Ic></div>
        <div className="ml-[6px] h-[17px] w-px bg-[#999]" />
        <div className="ml-[9px]"><Ic><path d="M0 1.500h16M0 4.500h16M0 7.500h16M0 10.500h16M0 13.500h16" stroke="#444" strokeDasharray="3 1" strokeWidth="1.400" /></Ic></div>
        <div className="ml-[7px]"><Caret c="#666" /></div>
        <div className="ml-[6px] h-[17px] w-px bg-[#999]" />
        <div className="ml-[8px]"><Ic><path d="M.5 4.500h5l1 1.500h8v8H.5z" fill="#e8c94a" stroke="#6d5312" /><path d="M3 8l-2 6h12l2-6z" fill="#f7e493" /><path d="M12 1v6M9 4h6" stroke="#000" strokeWidth="2" /></Ic></div>
        <div className="ml-[6px] h-[17px] w-px bg-[#999]" />
        <div className="ml-[8px]"><Ic><path d="M3 4v8.500h5M3 7.500h5" stroke="#777" /><path d="M1 .8h4v4H1zM7 5.500h4v4H7zM7 11h4v4H7z" fill="#e8c94a" stroke="#7d6410" strokeWidth=".8" /><path d="M12.500 7h3M12.500 9h3M12.500 12.500h3M12.500 14.500h3" stroke="#2a6ab0" /></Ic></div>
        <div className="ml-[5px] h-[17px] w-px bg-[#999]" />
        <div className="ml-[7px]"><Options /></div>
      </div>
      <div className="flex h-[27px] shrink-0 items-center pl-[2px] font-['DejaVu_Sans_Condensed','Open_Sans',sans-serif] text-[11px]">
        <Label className="pt-[2px]" w={44}>Location:</Label>
        <div className="ml-[8px] flex h-[22px] w-[243px] items-center border border-[#8a8a8a] bg-white pl-[3px] pr-[4px]">
          <Folder kind="home" />
          <div className="ml-[4px] pt-[2px]"><Label w={127}>Home - Gis09\Data Bab 05</Label></div>
          <div className="ml-auto"><Chevron /></div>
        </div>
      </div>
      <div className="flex h-[507px] w-[296px] flex-col border border-[#e3e3e3] border-l-[#7b7b7b] border-t-[#7b7b7b] bg-white text-[12px]">
        {catalog.map((n) => (
          <div key={n.t} className={`flex h-[17px] shrink-0 items-center ${n.l ? 'pl-[27px]' : 'pl-[8px]'}`}>
            <Box plus={n.plus} />
            <div className="ml-[6px]"><Folder kind={n.k} /></div>
            <div className={`ml-[3px] h-[17px] px-[2px] leading-[17px] ${n.sel ? 'bg-[#f0f0f0]' : ''}`}><Label w={n.w}>{n.t}</Label></div>
          </div>
        ))}
      </div>
    </div>
  );
}

/* ---------- dialog ---------- */
const Tab = ({ t, w, className }: { t: string; w: number; className: string }) => (
  <div className={`flex shrink-0 items-center justify-center border-r border-t border-[#e3e3e3] bg-[#f3f3f3] pt-[2px] ${className}`}><Label w={w}>{t}</Label></div>
);
const Btn = ({ u, t, w, className, blue }: { u?: string; t: string; w: number; className: string; blue?: boolean }) => (
  <div className={`flex h-[21px] items-center justify-center rounded-[4px] border bg-[#fdfdfd] pt-[2px] ${blue ? 'border-[#0067c0]' : 'border-[#d0d0d0]'} ${className}`}>
    <Label w={w}>{u && <span className="underline underline-offset-2">{u}</span>}{t}</Label>
  </div>
);
function Dialog() {
  return (
    <div className="absolute left-[547px] top-[30px] flex h-[662px] w-[488px] flex-col overflow-hidden rounded-[8px] border border-[#b9b9b9] bg-[#f0f0f0] font-['DejaVu_Sans_Condensed','Open_Sans',sans-serif] text-[11px] shadow-[0_6px_14px_rgba(0,0,0,0.08)]">
      <div className="flex h-[30px] shrink-0 items-center justify-between bg-[#eff3fa] pl-[8px] pr-[10px] font-['Open_Sans',sans-serif] text-[12px]">
        <Label w={118}>Data Frame Properties</Label>
        <div className="mb-[2px]"><Close s={11} sw={1} /></div>
      </div>
      <div className="ml-[8px] mt-[9px] flex h-[18px] w-[469px] shrink-0 border-l border-[#e3e3e3]">
        <Tab t="Feature Cache" w={70} className="w-[94px]" />
        <Tab t="Annotation Groups" w={88} className="w-[113px]" />
        <Tab t="Extent Indicators" w={79} className="w-[103px]" />
        <Tab t="Frame" w={29} className="w-[54px]" />
        <Tab t="Size and Position" w={81} className="w-[103px]" />
      </div>
      <div className="ml-[8px] flex h-[18px] w-[469px] shrink-0 items-stretch border-l border-[#e3e3e3]">
        <Tab t="General" w={37} className="w-[78px] pr-[2px]" />
        <Tab t="Data Frame" w={55} className="w-[96px]" />
        <div className="z-10 -mb-px -mt-[2px] flex w-[133px] shrink-0 items-center justify-center border-r border-t border-[#e3e3e3] bg-[#f9f9f9] pb-px pr-[4px] pt-px"><Label w={88}>Coordinate System</Label></div>
        <Tab t="Illumination" w={52} className="w-[91px] pr-[3px]" />
        <Tab t="Grids" w={25} className="w-[69px] pr-[5px]" />
      </div>
      <div className="ml-[6px] flex h-[548px] w-[472px] shrink-0 flex-col border border-[#e5e5e5] bg-[#f9f9f9] pl-[25px]">
        <div className="mt-[39px] flex h-[22px] shrink-0 items-center pl-[4px]">
          <Ic><path d="M0 1h13L8.500 7v7l-3-2V7z" fill="#8fa0b4" stroke="#53657c" strokeWidth=".7" /><ellipse cx="6.500" cy="1.500" rx="6" ry="1.200" fill="#d9e2ec" /><path d="M8 8h2v2H8zM11 8h2v2h-2zM14 8h2v2h-2zM8 11h2v2H8zM14 11h2v2h-2zM8 14h2v2H8zM11 14h2v2h-2zM14 14h2v2h-2z" fill="#0b5aa8" /></Ic>
          <div className="ml-[7px]"><Caret /></div>
          <div className="ml-[6px] h-[18px] w-px bg-[#777]" />
          <div className="ml-[11px] flex h-[21px] w-[200px] items-center justify-between border border-[#8a8a8a] bg-white pl-[5px] pr-[4px] font-['Open_Sans',sans-serif] text-[12px] text-[#6d6d6d]">
            <Label className="-mt-px" w={97}>Type here to search</Label>
            <Chevron />
          </div>
          <div className="ml-[8px]"><Ic><circle cx="8" cy="8" r="7.500" fill="#b9dcf5" stroke="#8ab4d8" /><circle cx="7" cy="7" r="3" fill="#e8f5ff" stroke="#1767b0" strokeWidth="1.500" /><path d="M9.500 9.500l3 3" stroke="#1767b0" strokeWidth="2" /></Ic></div>
          <div className="ml-[7px]"><Ic><circle cx="8" cy="8" r="7.500" fill="#d3d3d3" stroke="#b0b0b0" /><circle cx="9" cy="6" r="3.200" fill="#e6e6e6" stroke="#777" strokeWidth="1.300" /><path d="M11.500 9l3 4" stroke="#777" strokeWidth="2" /><path d="M1.500 8.500l6 6M7.500 8.500l-6 6" stroke="#333" strokeWidth="2" /></Ic></div>
          <div className="ml-[6px] h-[18px] w-px bg-[#777]" />
          <div className="relative ml-[9px]"><WireGlobe /><div className="absolute -right-[1px] top-0 h-[6px] w-[6px] rounded-full bg-[#f5f0a0]" /></div>
          <div className="ml-[7px]"><Caret /></div>
          <div className="ml-[7px]"><Ic><path d="M7 2l1.800 4.200 4.700.4-3.600 3 1.200 4.900L7 11.900l-4.100 2.600 1.200-4.900-3.600-3 4.700-.4z" fill="#fbbf2e" stroke="#b8741a" /><path d="M12.500 1v6M9.500 4h6" stroke="#000" strokeWidth="2" /></Ic></div>
        </div>
        <div className="mt-[10px] flex h-[166px] w-[413px] shrink-0 overflow-hidden border border-[#828790] bg-white p-px text-[12px]">
          <div className="flex h-[162px] flex-1 flex-col overflow-hidden pl-[79px] font-['Open_Sans',sans-serif]">
            {[12, 13, 14, 15, 16, 17, 18, 19, 20, 21].map((z) => (
              <div key={z} className="flex h-[17px] shrink-0 items-center">
                <WireGlobe dark={z === 17} />
                <div className={`ml-[3px] h-[17px] w-[138px] pl-[2px] leading-[17px] ${z === 17 ? 'bg-[#0078d7] text-white outline-1 -outline-offset-1 outline-dotted outline-[#e88a2a]' : ''}`}><Label w={134}>{`NAD 1983 UTM Zone ${z}N`}</Label></div>
              </div>
            ))}
          </div>
          <div className="w-[16px] bg-[#f0f0f0] pl-[7px] pt-[91px]"><div className="h-[20px] w-[2px] bg-[#868686]" /></div>
        </div>
        <div className="-ml-px mt-[6px] h-[16px] shrink-0 leading-[16px]"><Label w={131}>Current coordinate system:</Label></div>
        <div className="flex h-[151px] w-[413px] shrink-0 border border-[#e6e6e6] border-b-[#7b7b7b]">
          <div className="flex-1 pl-[4px] pt-[3px]">
            {crs.map(([t, w], i) => (
              <div key={i} className="h-[13px] leading-[13px]">{t && <Label w={w}>{t}</Label>}</div>
            ))}
          </div>
          <div className="my-px w-[17px] bg-[#f0f0f0] pl-[7px] pt-[17px]"><div className="h-[62px] w-[2px] bg-[#868686]" /></div>
        </div>
        <Btn blue u="T" t="ransformations..." w={90} className="-ml-px mt-[62px] w-[121px] shrink-0 pr-[2px]" />
      </div>
      <div className="mt-[8px] flex justify-end gap-[8px] pr-[7px]">
        <Btn blue t="OK" w={16} className="w-[73px]" />
        <Btn t="Cancel" w={34} className="w-[73px] pr-[2px]" />
        <Btn u="A" t="pply" w={26} className="w-[73px] pr-[2px]" />
      </div>
    </div>
  );
}

/* ---------- taskbar ---------- */
const Big = ({ children, ind, on }: { ind?: boolean; on?: boolean } & Kids) => (
  <div className={`relative flex h-[40px] w-[40px] shrink-0 items-center justify-center rounded-[4px] ${on ? 'border border-white/10 bg-white/10' : ''}`}>
    <svg width="24" height="24" viewBox="0 0 24 24" fill="none" className="block">{children}</svg>
    {ind && <div className={`absolute bottom-[1px] h-[3px] rounded-full ${on ? 'w-[16px] bg-[#4cc2ff]' : 'w-[6px] bg-[#9a9ea8]'}`} />}
  </div>
);
const Office = ({ c1, c2, c3, c4, b, l }: { c1: string; c2: string; c3: string; c4: string; b: string; l: string }) => (
  <>
    <path d="M6 1h18v6H6z" fill={c1} /><path d="M6 7h18v5H6z" fill={c2} /><path d="M6 12h18v5H6z" fill={c3} /><path d="M6 17h18v5H6z" fill={c4} />
    <path d="M0 6h12v12H0z" fill={b} />
    <text x="6" y="15.800" fontSize="10.500" fontWeight="bold" fontFamily="Open Sans, sans-serif" textAnchor="middle" fill="#fff">{l}</text>
  </>
);
function Taskbar() {
  return (
    <div className="flex h-[48px] shrink-0 items-center gap-[4px] border-y border-[#3f4248] bg-[linear-gradient(90deg,#1b222c_0,#1b222c_200px,#12244c_240px,#11226a_370px,#12206a_440px,#12254c_480px,#121f62_550px,#12254e_700px,#121f62_780px,#1a2140_880px,#12244e_960px,#121f62_990px,#12254c_1110px,#1a2038_1160px,#1b222c_1300px,#1b222c_1582px)] pl-[13px] font-['Open_Sans',sans-serif] text-white">
      <Big><defs><linearGradient id="win" x2="1" y2="1"><stop stopColor="#7ff2ff" /><stop offset="1" stopColor="#1090ff" /></linearGradient></defs><path d="M.5 .5h11v11H.5zM12.500 .5h11v11h-11zM.5 12.500h11v11H.5zM12.500 12.500h11v11h-11z" fill="url(#win)" /></Big>
      <Big ind><path d="M0 1h8l3 3h11v6H0z" fill="#e8a317" /><path d="M0 6h8l3-2h13v18H0z" fill="#ffcd45" /><path d="M4 22v-5c0-1.200.8-2 2-2h12c1.200 0 2 .8 2 2v5z" fill="#1a7fd6" /><path d="M7 18h10v2H7z" fill="#0d5ea8" /></Big>
      <Big>
        <defs><linearGradient id="edge" x2="1"><stop stopColor="#1aa6e0" /><stop offset="1" stopColor="#5fe24f" /></linearGradient></defs>
        <path d="M0 11C1 4 6 0 12 0c7 0 12 5 12 10 0 4-3 6-6 6-3 0-4.500-1.200-3.500-2.500C16.500 10 13 7 9 7c-5 0-8 3-9 6z" fill="url(#edge)" />
        <path d="M0 13c0-4 4-7 8-7-2 2-3 4.500-3 8 0 5 4 9 8 10C6 24.500 0 20 0 13z" fill="#0d72c8" />
        <path d="M8 13c0 5 5 7.500 9 7.500 2.500 0 4.500-1 5.500-1.500-2 3.500-6 5.500-9.500 5C8 23 5.500 18 6.500 14c.5-3 2.500-5 4.500-5-1.500 1-3 2.500-3 4z" fill="#0a4f9a" />
      </Big>
      <Big><Office c1="#41a5ee" c2="#2b7cd3" c3="#185abd" c4="#103f91" b="#1b55b5" l="W" /></Big>
      <Big><Office c1="#2fbf7d" c2="#21a366" c3="#107c41" c4="#185c37" b="#0f703b" l="X" /></Big>
      <Big><circle cx="13" cy="12" r="11" fill="#ed6c47" /><path d="M13 1a11 11 0 0 1 11 11H13z" fill="#ff8f6b" /><path d="M2 12h22a11 11 0 0 1-22 0z" fill="#d35230" /><path d="M0 6h12v12H0z" fill="#c43e1c" /><text x="6" y="15.800" fontSize="10.500" fontWeight="bold" fontFamily="Open Sans, sans-serif" textAnchor="middle" fill="#fff">P</text></Big>
      <Big on ind>
        <circle cx="12" cy="12" r="11.500" fill="#1565a8" /><path d="M4 4c5-5 13-4 17 2l-2 6 2 6-5 4-3-6-8-4z" fill="#3fae48" />
        <circle cx="11" cy="10" r="6.300" fill="#bfe0f2" stroke="#f0f4f6" strokeWidth="1.600" /><path d="M7.500 9c1-3 4-4 6-3-1 2-3 3-6 3z" fill="#fff" /><path d="M15.800 15l7 7.500" stroke="#a05a2c" strokeWidth="2.600" />
      </Big>
      <Big ind>
        <path d="M10 3l6-3 8 2v15l-9 5-5-2z" fill="#b99818" /><path d="M10 3l6-3 8 2-8 3z" fill="#fbe978" /><path d="M10 3l6 2v16l-6-2z" fill="#e8cf4a" /><path d="M16 5v16.500" stroke="#8a7010" strokeWidth=".6" />
        <circle cx="10" cy="13" r="4.500" fill="#2f8fc8" /><path d="M7 12l3-3 3 2-2 3z" fill="#6cd06a" /><path d="M0 15l6 3 8-3v5l-7 4-5-3z" fill="#f0d84e" stroke="#8a7010" strokeWidth=".7" /><path d="M3 19.500l3 1.500" stroke="#6a5408" />
      </Big>
      <div className="ml-auto flex items-center pr-[21px]">
        <svg width="11" height="7" viewBox="0 0 11 7" fill="none"><path d="M.8 6.200l4.700-4.700 4.700 4.700" stroke="#fff" strokeWidth="1.500" /></svg>
        <svg width="17" height="17" viewBox="0 0 17 17" fill="none" className="ml-[18px]"><path d="M11 1.500H2.500a1 1 0 0 0-1 1v9a1 1 0 0 0 1 1h8M4 15.500h8M6.500 12.500v3M9.500 12.500v3M12.500 1h3v5h-3zM14 6v10" stroke="#fff" strokeWidth="1.100" /></svg>
        <svg width="17" height="14" viewBox="0 0 17 14" fill="none" className="ml-[7px]"><path d="M.6 5h2.500L6.500 1.800v10.400L3.100 9H.6zM8.500 5c1 1 1 3 0 4M11 3c2 2 2 6 0 8M13.500 1c3 3 3 9 0 12" stroke="#fff" strokeWidth="1.100" /></svg>
        <div className="ml-[16px] flex w-[49px] flex-col items-end text-[12px] leading-[16px]">
          <Label w={43}>3:33 PM</Label>
          <Label w={49}>5/4/2024</Label>
        </div>
        <svg width="14" height="16" viewBox="0 0 14 16" className="ml-[8px]"><path d="M7 0a5 5 0 0 1 5 5v4l1.500 3.500H.5L2 9V5a5 5 0 0 1 5-5zM4.800 13.800h4.400a2.200 2.200 0 0 1-4.400 0z" fill="#8fe3ff" /></svg>
      </div>
    </div>
  );
}

function StatusIcons() {
  return (
    <div className="ml-auto flex items-center gap-[5px] pr-[11px]">
      <svg width="12" height="14" viewBox="0 0 12 14" className="mr-px"><rect width="12" height="14" rx="1" fill="#dedede" /><circle cx="6" cy="6" r="4" fill="#222" /><circle cx="6" cy="6" r="1.800" fill="#dedede" /><path d="M3 8l-1 3 4-1z" fill="#222" /></svg>
      <svg width="16" height="15" viewBox="0 0 16 15"><path d="M0 0h15v11H0z" fill="#dedede" /><path d="M3 2v3M5.200 2v3M7.500 2v3M9.700 2v3M12 2v3" stroke="#222" /><path d="M2 11h9v2H4z" fill="#dedede" /><rect x="9" y="8" width="7" height="7" rx="1" fill="#e53935" /><path d="M11 10l3 3M14 10l-3 3" stroke="#fff" /></svg>
      <svg width="15" height="15" viewBox="0 0 15 15"><rect width="13" height="13" rx="1" fill="#dedede" /><path d="M5 9V3h5v5" stroke="#222" strokeWidth="1.600" fill="none" /><circle cx="4" cy="9.500" r="1.600" fill="#222" /><circle cx="9" cy="8.500" r="1.500" fill="#222" /><rect x="8" y="8" width="7" height="7" rx="1" fill="#e53935" /><path d="M10 10l3 3M13 10l-3 3" stroke="#fff" /></svg>
      <svg width="15" height="15" viewBox="0 0 15 15" className="ml-[2px]"><path d="M1 2h13v10l-2 2H1z" fill="#d4d6ce" /><circle cx="3" cy="2.500" r="2.500" fill="#8f9296" /><path d="M3 4l3 4" stroke="#777" strokeWidth="1.500" /></svg>
    </div>
  );
}

export default function App() {
  return (
    <div className="flex h-[900px] w-[1600px] flex-col overflow-hidden bg-[#2b2524]">
      <TopBar />
      <div className="h-[7px] shrink-0 bg-[linear-gradient(90deg,#4c3c37_0,#57453c_170px,#1c1a2c_195px,#191a30_330px,#4a3a36_350px,#1d1b2a_375px,#463336_420px,#6a4640_560px,#8a6458_740px,#d0c8c0_785px,#3a3036_795px,#b8b0a8_810px,#3c3a38_850px,#c8c4b8_870px,#1f1d26_935px,#2a2024_1000px,#c8b4b0_1020px,#a8705c_1110px,#e0b890_1220px,#f0d8b0_1310px,#c89070_1370px,#6a3e40_1450px,#7a5a56_1530px,#6a4a4c_1600px)]" />
      <div className="flex h-[846px] shrink-0">
        <div className="w-[8px] shrink-0 bg-gradient-to-b from-[#46352f] via-[#32272a] to-[#2b2b28]" />
        <div className="flex w-[1584px] shrink-0 flex-col overflow-hidden rounded-[12px] border-x border-[#3a3a3a] bg-[#212121]">
          <div className="flex h-[29px] shrink-0 items-center gap-[16px] border-b border-[#3f4248] pl-[7px] pt-[2px] font-['Lato',sans-serif] text-[15px] text-[#eef6f6]">
            <Label w={26}>File</Label>
            <Label w={113}>Virtual Machine</Label>
            <Label w={34}>Help</Label>
          </div>
          <div className="relative flex h-[777px] shrink-0 flex-col bg-[#f0f0f0] font-['Open_Sans',sans-serif] text-black">
            <div className="flex h-[23px] shrink-0 items-center bg-[#f3f3f3] pl-[2px] text-[12px] text-[#8c8c8c]">
              <svg width="16" height="16" viewBox="0 0 16 16" fill="none">
                <circle cx="8" cy="8" r="7.500" fill="#123f6c" /><path d="M10 1.500c4 1 5 4 5 7l-3 5-2-3z" fill="#3f9848" /><circle cx="7" cy="7" r="4" fill="#c4e2f2" stroke="#e8eef2" strokeWidth="1.200" /><path d="M10.500 10.500l4.500 4.500" stroke="#b0602c" strokeWidth="2" />
              </svg>
              <div className="ml-[5px]"><Label w={104}>Bab05-01 - ArcMap</Label></div>
              <div className="ml-auto mr-[20px] flex items-center gap-[34px] pb-[2px]">
                <div className="h-px w-[11px] bg-[#8c8c8c]" />
                <svg width="11" height="11" viewBox="0 0 11 11" fill="none" className="mr-px"><path d="M.5 3.500a1 1 0 0 1 1-1h6a1 1 0 0 1 1 1v6a1 1 0 0 1-1 1h-6a1 1 0 0 1-1-1zM3 .5h5.500a2 2 0 0 1 2 2V8" stroke="#8c8c8c" /></svg>
                <Close s={11} c="#8c8c8c" sw={0.9} />
              </div>
            </div>
            <div className="flex shrink-0 flex-col bg-gradient-to-r from-[#f0f0f0] to-[#fcfcfc]">
              <div className="flex h-[26px] shrink-0 items-center gap-[16px] pl-[12px] text-[12px]">
                {menus.map(([t, w]) => <Label key={t} w={w}>{t}</Label>)}
              </div>
              <Toolbars />
            </div>
            <div className="flex h-[583px] shrink-0">
              <Toc />
              <MapPane />
              <Catalog />
            </div>
            <div className="flex h-[20px] shrink-0 items-center bg-[#f1f1f1] pl-[1329px] pt-px text-[12px]">
              <Label w={163}>1431869.873  15199551.799 Feet</Label>
            </div>
            <Taskbar />
            <Dialog />
            <svg width="14" height="22" viewBox="0 0 14 22" className="absolute left-[836px] top-[271px]">
              <path d="M.5 .8v16.500l3.800-3.600 2.700 6.500 2.700-1.100-2.700-6.300h5.300z" fill="#fff" stroke="#111" />
            </svg>
          </div>
          <div className="flex h-[40px] shrink-0 items-center pl-[13px] font-['Lato',sans-serif] text-[13.500px] text-[#e8f2f2]">
            <Label className="pt-[2px]" w={192}>To release input, press Ctrl+Alt</Label>
            <StatusIcons />
          </div>
        </div>
        <div className="w-[8px] shrink-0 bg-[linear-gradient(180deg,#6a4a4c_0,#4a3a40_120px,#1b2440_170px,#1a2138_270px,#5a2c34_310px,#8a5a48_370px,#7a5248_440px,#33202c_560px,#2a1820_846px)]" />
      </div>
      <div className="h-[7px] shrink-0 bg-[linear-gradient(90deg,#2c2a28_0,#33403e_100px,#3a4442_300px,#2b2228_330px,#2a1e26_540px,#5a4a44_560px,#3a3030_680px,#5a4640_900px,#3a2c2c_1080px,#1a1c2c_1150px,#5a5048_1230px,#1c2030_1300px,#6a5a50_1400px,#2a2024_1600px)]" />
    </div>
  );
}
